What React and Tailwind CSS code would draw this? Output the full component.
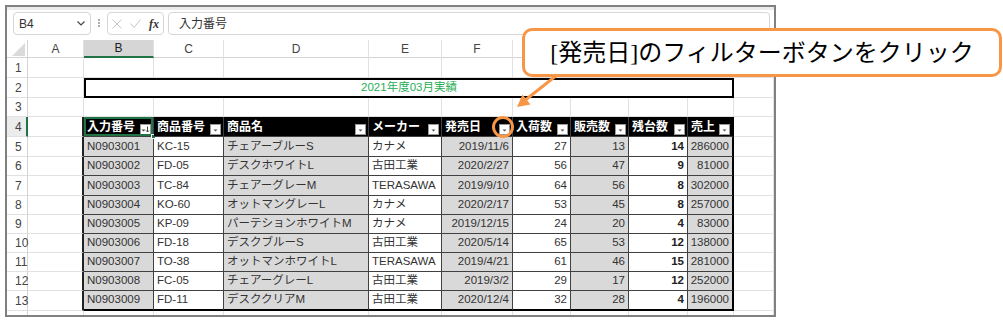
import React from 'react';

// 列幅 (A〜K)
const COL_W = ['w-[56px]', 'w-[70px]', 'w-[70px]', 'w-[145px]', 'w-[73px]', 'w-[71px]', 'w-[58px]', 'w-[58px]', 'w-[59px]', 'w-[46px]', 'w-[40px]'];
const LETTERS = ['A', 'B', 'C', 'D', 'E', 'F', 'G', 'H', 'I', 'J', 'K'];

const HEADERS = ['入力番号', '商品番号', '商品名', 'メーカー', '発売日', '入荷数', '販売数', '残台数', '売上'];

const DATA = [
  ['N0903001', 'KC-15', 'チェアーブルーS', 'カナメ', '2019/11/6', 27, 13, 14, 286000],
  ['N0903002', 'FD-05', 'デスクホワイトL', '古田工業', '2020/2/27', 56, 47, 9, 81000],
  ['N0903003', 'TC-84', 'チェアーグレーM', 'TERASAWA', '2019/9/10', 64, 56, 8, 302000],
  ['N0903004', 'KO-60', 'オットマングレーL', 'カナメ', '2020/2/17', 53, 45, 8, 257000],
  ['N0903005', 'KP-09', 'パーテションホワイトM', 'カナメ', '2019/12/15', 24, 20, 4, 83000],
  ['N0903006', 'FD-18', 'デスクブルーS', '古田工業', '2020/5/14', 65, 53, 12, 138000],
  ['N0903007', 'TO-38', 'オットマンホワイトL', 'TERASAWA', '2019/4/21', 61, 46, 15, 281000],
  ['N0903008', 'FC-05', 'チェアーグレーL', '古田工業', '2019/3/2', 29, 17, 12, 252000],
  ['N0903009', 'FD-11', 'デスククリアM', '古田工業', '2020/12/4', 32, 28, 4, 196000],
];

// 行の高さ (5〜13行目)
const DATA_H = ['h-[20px]', 'h-[19px]', 'h-[20px]', 'h-[19px]', 'h-[19px]', 'h-[19px]', 'h-[19px]', 'h-[19px]', 'h-[20px]'];

const FilterBtn = ({ sort = false }) => (
  <span className="self-end mb-[1px] mr-[2px] w-[11px] h-[11px] shrink-0 bg-white border border-[#9a9a9a] flex items-center justify-center">
    <svg width="9" height="9" viewBox="0 0 9 9">
      {sort ? (
        <>
          <path d="M0.5 4.5h4L2.5 6.5z" fill="#444" />
          <path d="M6.5 1.5v5.5M5 5.5l1.5 1.5L8 5.5" stroke="#444" strokeWidth="1" fill="none" />
        </>
      ) : (
        <path d="M2.5 4.5h4L4.5 6.5z" fill="#555" />
      )}
    </svg>
  </span>
);

const RowHead = ({ n, h, active = false }) => (
  <div
    className={`w-[21px] ${h} shrink-0 pl-[8px] flex items-center text-[12px] text-[#444] border-b border-[#e1e1e1] ${
      active ? 'border-r-2 border-r-[#217346] bg-[#ececec]' : 'border-r border-r-[#d4d4d4]'
    }`}
  >
    {n}
  </div>
);

const Blank = ({ w, extra = '' }) => <div className={`${w} h-full shrink-0 border-r border-b border-[#e1e1e1] ${extra}`} />;

export default function App() {
  return (
    <div
      className="relative w-[1003px] h-[322px] bg-white overflow-hidden pl-[5px] pt-[5px]"
      style={{ fontFamily: '"Liberation Sans", "Noto Sans CJK JP", sans-serif' }}
    >
      {/* Excel ウィンドウ */}
      <div className="w-[771px] h-[312px] border-2 border-[#808080] flex flex-col overflow-hidden">
        <div className="h-[3px] bg-[#ebebeb] shrink-0" />

        {/* 数式バー */}
        <div className="h-[30px] shrink-0 flex items-start pt-[2px] pl-[6px] pr-[4px]">
          <div className="w-[78px] h-[23px] rounded-[4px] border border-[#d6d6d6] flex items-center justify-between pl-[5px] pr-[5px]">
            <span className="text-[12px] text-[#333]">B4</span>
            <svg width="8" height="5" viewBox="0 0 8 5">
              <path d="M0.5 0.5L4 4l3.5-3.5" stroke="#444" strokeWidth="1.2" fill="none" />
            </svg>
          </div>
          <svg width="16" height="23" viewBox="0 0 16 23" className="shrink-0">
            <circle cx="8" cy="8" r="0.9" fill="#888" />
            <circle cx="8" cy="11" r="0.9" fill="#888" />
            <circle cx="8" cy="14" r="0.9" fill="#888" />
          </svg>
          <div className="w-[57px] h-[23px] rounded-[4px] border border-[#d6d6d6] flex items-center pl-[4px] gap-[8px]">
            <svg width="10" height="10" viewBox="0 0 10 10">
              <path d="M0.5 0.5l9 9M9.5 0.5l-9 9" stroke="#c4c4c4" strokeWidth="1" />
            </svg>
            <svg width="11" height="9" viewBox="0 0 11 9">
              <path d="M0.5 4.5l3.5 4L10.5 0.5" stroke="#c4c4c4" strokeWidth="1" fill="none" />
            </svg>
            <span className="text-[12px] italic font-bold text-[#333]" style={{ fontFamily: '"Liberation Serif", serif' }}>
              fx
            </span>
          </div>
          <div className="ml-[4px] flex-1 h-[23px] rounded-[4px] border border-[#d6d6d6] flex items-center pl-[10px] text-[12px] text-[#333]">
            入力番号
          </div>
        </div>

        {/* シート */}
        <div className="flex-1 overflow-hidden text-[11.5px] text-[#333]">
          {/* 列見出し */}
          <div className="flex h-[18px]">
            <div className="w-[21px] h-full shrink-0 border-r border-b border-[#d4d4d4] flex items-end justify-end pr-[2px] pb-[1px]">
              <svg width="13" height="13" viewBox="0 0 13 13">
                <path d="M13 0V13H0z" fill="#dadada" />
              </svg>
            </div>
            {LETTERS.map((l, i) => (
              <div
                key={l}
                className={`${COL_W[i]} h-full shrink-0 flex items-center justify-center border-r border-[#e1e1e1] text-[12px] ${
                  l === 'B' ? 'bg-[#d6d6d6] border-b-2 border-b-[#217346] text-[#222]' : 'border-b border-b-[#d4d4d4] text-[#444]'
                }`}
              >
                {l}
              </div>
            ))}
          </div>

          {/* 1行目 */}
          <div className="flex h-[20px]">
            <RowHead n={1} h="h-[20px]" />
            {COL_W.map((w, i) => (
              <Blank key={i} w={w} />
            ))}
          </div>

          {/* 2行目: 結合セル */}
          <div className="flex h-[20px]">
            <RowHead n={2} h="h-[20px]" />
            <Blank w={COL_W[0]} />
            <div className="w-[650px] h-full shrink-0 border-2 border-black flex items-center justify-center text-[11.5px] text-[#1fae55]">
              2021年度03月実績
            </div>
            <Blank w={COL_W[10]} />
          </div>

          {/* 3行目 */}
          <div className="flex h-[19px]">
            <RowHead n={3} h="h-[19px]" />
            {COL_W.map((w, i) => (
              <Blank key={i} w={w} />
            ))}
          </div>

          {/* 4行目: テーブル見出し */}
          <div className="flex h-[20px]">
            <RowHead n={4} h="h-[20px]" active />
            <Blank w={COL_W[0]} extra="border-r-2 border-r-[#222]" />
            {HEADERS.map((h, i) => (
              <div
                key={h}
                className={`${COL_W[i + 1]} h-full shrink-0 relative bg-black text-white text-[12px] font-bold flex items-center justify-between pl-[3px] border-b border-b-[#404040] ${
                  i === 8 ? 'border-r-2 border-r-black' : 'border-r border-r-[#404040]'
                }`}
              >
                <span className="whitespace-nowrap">{h}</span>
                <FilterBtn sort={i === 0} />
                {i === 0 && (
                  <>
                    <div className="absolute inset-0 border-2 border-[#217346]" />
                    <div className="absolute -right-[3px] -bottom-[3px] w-[5px] h-[5px] bg-[#217346] border border-white" />
                  </>
                )}
              </div>
            ))}
            <Blank w={COL_W[10]} />
          </div>

          {/* 5〜13行目 */}
          {DATA.map((row, r) => (
            <div key={r} className={`flex ${DATA_H[r]}`}>
              <RowHead n={r + 5} h={DATA_H[r]} />
              <Blank w={COL_W[0]} extra="border-r-2 border-r-[#222]" />
              {row.map((v, i) => (
                <div
                  key={i}
                  className={`${COL_W[i + 1]} h-full shrink-0 flex items-center px-[3px] whitespace-nowrap overflow-hidden ${
                    i % 2 === 0 ? 'bg-[#d9d9d9]' : 'bg-white'
                  } ${i >= 4 ? 'justify-end' : 'justify-start'} ${i === 7 ? 'font-bold text-[#222]' : ''} ${
                    i === 8 ? 'border-r-2 border-r-black' : 'border-r border-r-[#404040]'
                  } ${r === 8 ? 'border-b-2 border-b-black' : 'border-b border-b-[#404040]'}`}
                >
                  {v}
                </div>
              ))}
              <Blank w={COL_W[10]} />
            </div>
          ))}

          {/* 14行目 (一部のみ) */}
          <div className="flex h-[20px]">
            <RowHead n={14} h="h-[20px]" />
            {COL_W.map((w, i) => (
              <Blank key={i} w={w} />
            ))}
          </div>
        </div>
      </div>

      {/* 矢印と丸印 */}
      <svg className="absolute left-0 top-0 pointer-events-none" width="1003" height="322" viewBox="0 0 1003 322">
        <line x1="557" y1="75" x2="526" y2="99.5" stroke="#f79646" strokeWidth="3" />
        <polygon points="517,107 522.5,94.5 530.5,104.5" fill="#f79646" />
        <circle cx="503" cy="127" r="9.5" fill="none" stroke="#f79646" strokeWidth="3" />
      </svg>

      {/* 吹き出し */}
      <div
        className="absolute left-[522px] top-[28px] w-[480px] h-[49px] bg-white border-[3px] border-[#f79646] rounded-[10px] flex items-center justify-center text-[24px] text-black"
        style={{ fontFamily: '"Liberation Serif", "Noto Sans CJK JP", serif' }}
      >
        [発売日]のフィルターボタンをクリック
      </div>
    </div>
  );
}
